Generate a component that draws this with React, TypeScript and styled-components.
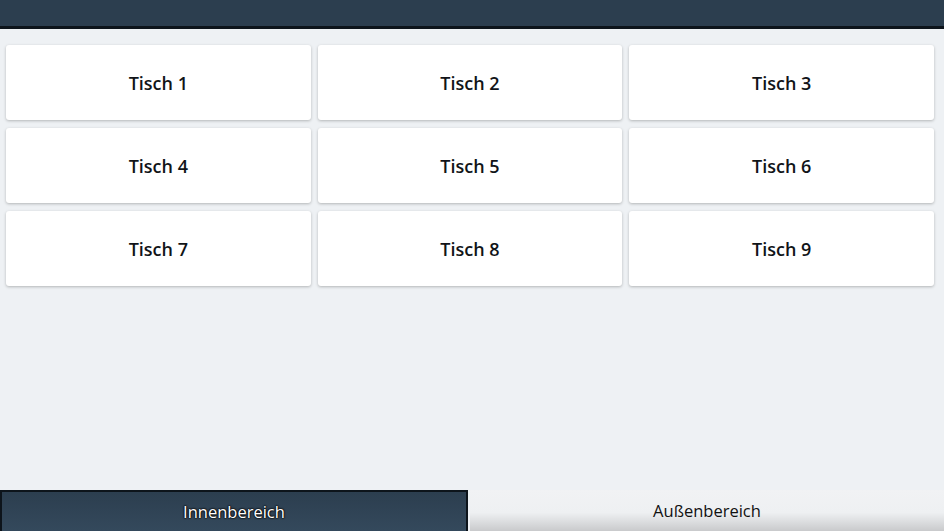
import React, { useState } from "react";
import styled, { createGlobalStyle } from "styled-components";

const GlobalStyle = createGlobalStyle`
  html, body {
    margin: 0;
    padding: 0;
    height: 100%;
    background: #eef1f4;
    font-family: "Open Sans", "Noto Sans", sans-serif;
  }
  #root {
    height: 100%;
  }
`;

const tables = Array.from({ length: 9 }, (_, i) => `Tisch ${i + 1}`);
const areas = ["Innenbereich", "Außenbereich"];

function App() {
  const [area, setArea] = useState(0);

  return (
    <Page>
      <GlobalStyle />
      <Header />
      <Grid>
        {tables.map((t) => (
          <TableCard key={t}>{t}</TableCard>
        ))}
      </Grid>
      <Tabs>
        {areas.map((a, i) => (
          <Tab key={a} active={area === i} onClick={() => setArea(i)}>
            {a}
          </Tab>
        ))}
      </Tabs>
    </Page>
  );
}

export default App;

const Page = styled.div`
  height: 531px;
  display: flex;
  flex-direction: column;
  background: #eef1f4;
`;

const Header = styled.div`
  height: 26px;
  background: #2c3e4f;
  border-bottom: 3px solid #0d141b;
  flex-shrink: 0;
`;

const Grid = styled.div`
  flex: 1;
  display: grid;
  grid-template-columns: repeat(3, 1fr);
  grid-auto-rows: 75px;
  column-gap: 7px;
  row-gap: 8px;
  padding: 16px 10px 0 6px;
  align-content: start;
`;

const TableCard = styled.div`
  background: #ffffff;
  border-radius: 3px;
  box-shadow: 0 1px 3px rgba(0, 0, 0, 0.25);
  display: flex;
  align-items: center;
  justify-content: center;
  font-size: 18px;
  font-weight: 600;
  color: #111418;
  cursor: pointer;
`;

const Tabs = styled.div`
  height: 41px;
  display: grid;
  grid-template-columns: 468px 1fr;
  column-gap: 2px;
  flex-shrink: 0;
`;

const Tab = styled.div<{ active: boolean }>`
  display: flex;
  align-items: center;
  justify-content: center;
  font-size: 16.5px;
  cursor: pointer;
  ${(p) =>
    p.active
      ? `
    background: linear-gradient(#2c3e4f, #34495c);
    border: 2px solid #0d141b;
    border-bottom: none;
    color: #ffffff;
    text-shadow: 0 0 2px #000, 0 0 2px #000, 0 0 1px #000;
  `
      : `
    background: linear-gradient(#f1f2f4 0%, #eef0f2 55%, #c9cacc 100%);
    color: #111;
  `}
`;
